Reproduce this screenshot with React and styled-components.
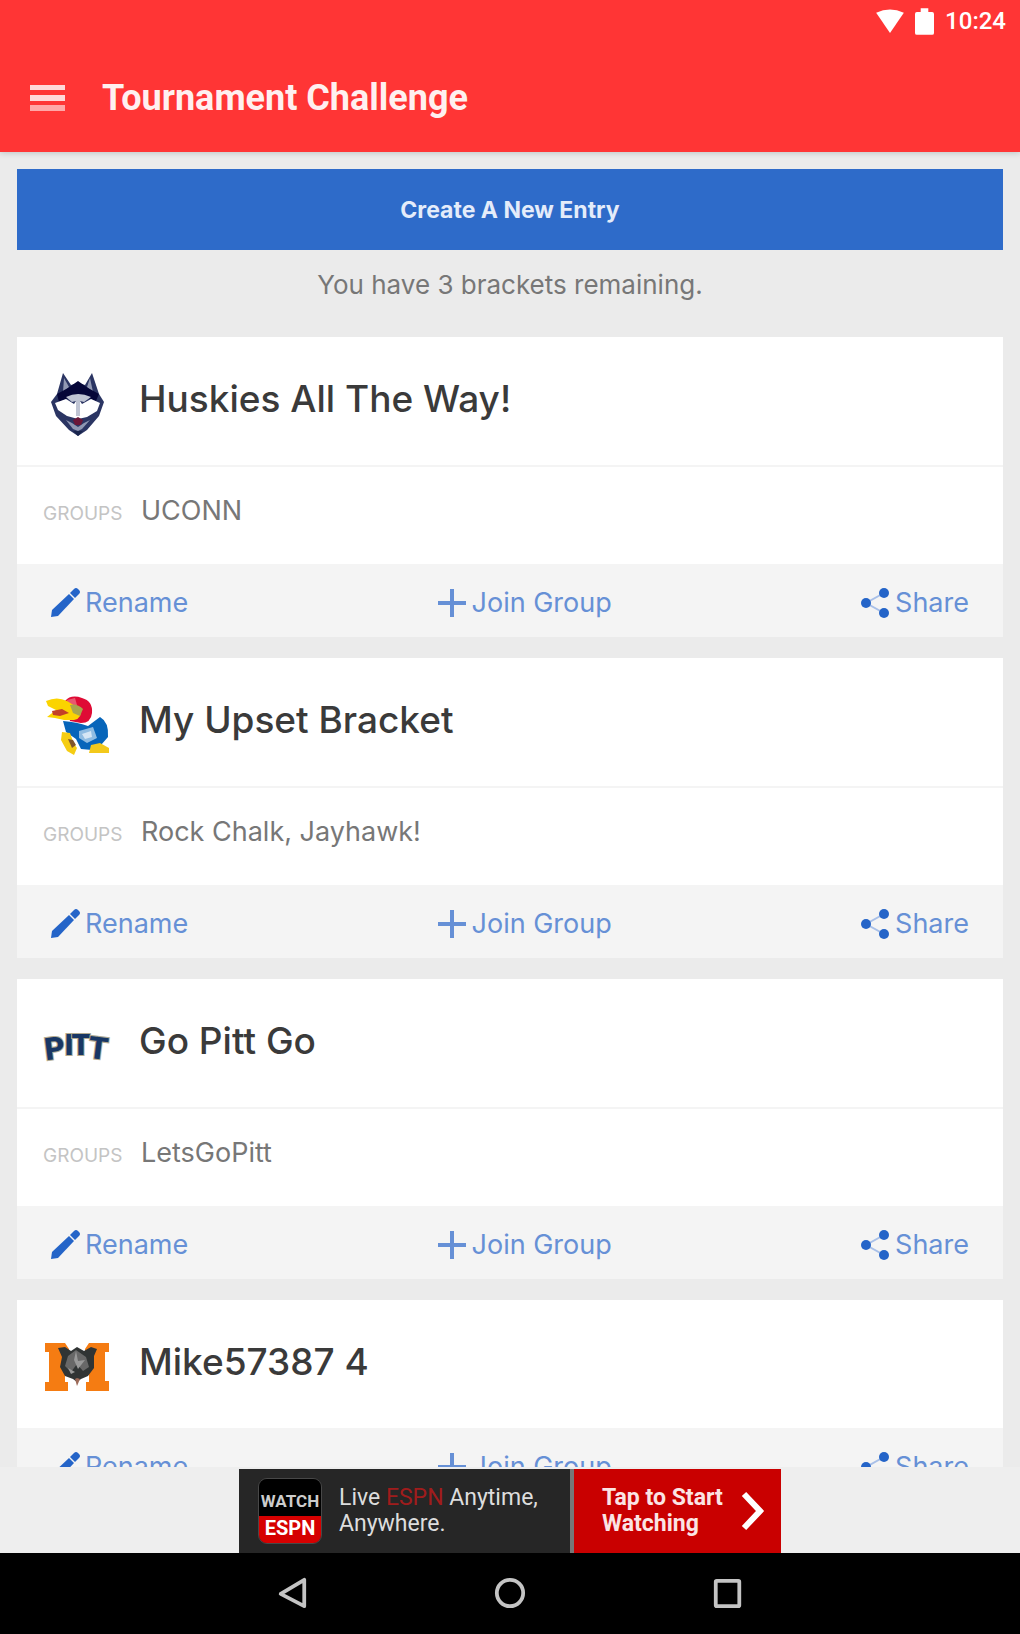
import * as React from 'react';
import styled, { createGlobalStyle } from 'styled-components';

const GlobalStyle = createGlobalStyle`
  * {
    box-sizing: border-box;
  }

  body {
    margin: 0;
    background: #000;
    font-family: Inter, 'Liberation Sans', sans-serif;
  }

  h1, h2, p, dl, dt, dd, ul {
    margin: 0;
    padding: 0;
  }

  button {
    border: 0;
    padding: 0;
    background: none;
    font-family: inherit;
    cursor: pointer;
  }
`

const Screen = styled.div`
  display: flex;
  flex-direction: column;
  height: 100vh;
  background: #ebebeb;
`

const Header = styled.header`
  flex: none;
  z-index: 1;
  color: #fff;
  background: #ff3535;
  box-shadow: 0 1px 6px rgba(0, 40, 40, 0.2);
`

const StatusBar = styled.div`
  display: flex;
  align-items: center;
  justify-content: flex-end;
  gap: 11px;
  height: 42px;
  padding-right: 14px;
  font-family: Roboto, sans-serif;
  font-size: 24px;
  font-weight: 500;
  line-height: 42px;
`

const Toolbar = styled.div`
  display: flex;
  align-items: center;
  gap: 37px;
  height: 110px;
  padding: 2px 30px 0;
`

const MenuButton = styled.button`
  display: flex;
  color: #ffd8d8;
`

const AppTitle = styled.h1`
  color: #fff0f0;
  font-family: Roboto, sans-serif;
  font-size: 36px;
  font-weight: 700;
  line-height: 44px;
`

const Content = styled.main`
  flex: 1;
  min-height: 0;
  padding: 17px;
  overflow-y: auto;
  scrollbar-width: none;
`

const CreateButton = styled.button`
  display: block;
  width: 100%;
  height: 81px;
  color: #e4ecfa;
  background: #2e6bc9;
  font-size: 23px;
  font-weight: 700;
`

const Remaining = styled.p`
  padding: 17px 0 34px;
  color: #777;
  font-size: 26px;
  line-height: 36px;
  text-align: center;
`

const EntryList = styled.ul`
  display: flex;
  flex-direction: column;
  gap: 21px;
  list-style: none;
`

const Card = styled.li`
  background: #fff;
`

const CardHead = styled.div`
  display: flex;
  align-items: center;
  gap: 28px;
  height: 128px;
  padding: 6px 26px 0;

  svg {
    flex: none;
  }
`

const EntryName = styled.h2`
  padding-bottom: 10px;
  color: #3a3a3a;
  font-size: 37px;
  font-weight: 500;
  line-height: 44px;
`

const Groups = styled.dl`
  display: flex;
  align-items: baseline;
  height: 99px;
  padding: 28px 26px 0;
  border-top: 2px solid #f4f4f4;
  line-height: 32px;
`

const GroupsLabel = styled.dt`
  width: 98px;
  color: #c4c4c4;
  font-size: 19px;
`

const GroupsValue = styled.dd`
  color: #777;
  font-size: 27px;
`

const Actions = styled.div`
  display: flex;
  align-items: center;
  justify-content: space-between;
  height: 73px;
  padding: 4px 34px 0;
  background: #f4f4f4;
`

const ActionButton = styled.button`
  display: flex;
  align-items: center;
  gap: 5px;
  color: #6690d6;
  font-size: 27px;
  line-height: 32px;

  svg {
    color: ${props => props.$soft ? '#6690d6' : '#2464c8'};
  }
`

const AdBar = styled.aside`
  display: flex;
  flex: none;
  align-items: flex-end;
  justify-content: center;
  height: 86px;
  background: #eee;
`

const AdLink = styled.a`
  display: flex;
  gap: 4px;
  width: 542px;
  height: 84px;
  background: #777;
  font-family: Roboto, sans-serif;
  font-size: 23px;
  line-height: 26px;
  text-decoration: none;
  white-space: nowrap;
`

const AdText = styled.div`
  display: flex;
  flex: 1;
  align-items: center;
  gap: 17px;
  padding-left: 19px;
  color: #ddd;
  background: #262626;
`

const Brand = styled.span`
  color: #a01c1c;
`

const AdCall = styled.div`
  display: flex;
  align-items: center;
  justify-content: space-between;
  width: 207px;
  padding: 0 16px 0 28px;
  color: #fbe4e4;
  background: #c90000;
  font-weight: 700;
`

const Badge = styled.div`
  display: flex;
  flex: none;
  flex-direction: column;
  width: 64px;
  height: 66px;
  border: 1px solid #484848;
  border-radius: 9px;
  overflow: hidden;
  font-size: 17px;
  font-weight: 700;
  line-height: 18px;
  text-align: center;
`

const BadgeTop = styled.div`
  flex: 1;
  padding-top: 13px;
  color: #ccc;
  background: #000;
`

const BadgeBottom = styled.div`
  flex: 1;
  padding-top: 3px;
  color: #fff;
  background: #d60000;
  font-size: 20px;
`

const NavBar = styled.nav`
  display: flex;
  flex: none;
  align-items: center;
  justify-content: center;
  gap: 186px;
  height: 81px;
  padding-bottom: 2px;
  background: #000;
`

const NavButton = styled.button`
  display: flex;
  color: #c4c4c4;
`


const WifiIcon = () => (
  <svg width="28" height="24" viewBox="0 0 30 26" fill="#fff" aria-hidden="true">
    <path d="M0 4 Q15 -3 30 4 L15 26 Z" />
  </svg>
)

const BatteryIcon = () => (
  <svg width="19" height="27" viewBox="0 0 20 28" fill="#fff" aria-hidden="true">
    <path d="M6 0h8v4h4a2 2 0 0 1 2 2v20a2 2 0 0 1-2 2H2a2 2 0 0 1-2-2V6a2 2 0 0 1 2-2h4z" />
  </svg>
)

const MenuIcon = () => (
  <svg width="35" height="28" viewBox="0 0 35 28" fill="currentColor" aria-hidden="true">
    <path d="M0 1h35v5H0zM0 11h35v6H0z" />
    <path d="M0 21h35v6H0z" opacity="0.7" />
  </svg>
)

const PencilIcon = () => (
  <svg width="29" height="29" viewBox="0 0 29 29" fill="currentColor" aria-hidden="true">
    <path d="M0 29 L1 22 L18 6 L23 11 L7 28 Z" />
    <path d="M19 5 L23 1 Q25 -1 27 1 L28 2 Q30 4 28 6 L24 10 Z" />
  </svg>
)

const PlusIcon = () => (
  <svg width="30" height="30" viewBox="0 0 30 30" fill="none" stroke="currentColor" strokeWidth="4" aria-hidden="true">
    <path d="M15 1v28M1 15h28" />
  </svg>
)

const ShareIcon = () => (
  <svg width="30" height="30" viewBox="0 0 30 30" fill="currentColor" aria-hidden="true">
    <path d="M24 5 L6 15 L24 25" fill="none" stroke="#a9c0e8" strokeWidth="2" />
    <circle cx="24" cy="5" r="5" />
    <circle cx="6" cy="15" r="5" />
    <circle cx="24" cy="25" r="5" />
  </svg>
)

const HuskyLogo = () => (
  <svg width="68" height="68" viewBox="0 0 68 68" role="img" aria-label="Connecticut Huskies">
    <path d="M20 3 L28 15 L35 13 L42 15 L49 3 L56 24 L61 32 L56 46 L44 60 L35 66 L26 60 L13 46 L8 32 L14 24 Z" fill="#2b3563" />
    <path d="M21 8 L26 17 L20 22 Z M47 8 L50 22 L44 17 Z" fill="#9299b3" />
    <path d="M14 24 L25 18 L35 11 L45 18 L56 24 L53 31 L35 24 L16 32 Z" fill="#050638" />
    <path d="M12 33 L23 29 L31 34 L35 28 L39 34 L48 29 L57 33 L54 41 L44 47 L35 49 L24 46 L15 40 Z" fill="#fff" />
    <path d="M23 27 Q35 21 48 27 L41 32 L37 31 L37 46 L33 46 L33 31 L29 32 Z" fill="#bfc4d3" />
    <path d="M23 50 L29 53 L35 57 L41 53 L47 50 L39 59 L35 61 L30 59 Z" fill="#8f97b2" />
    <path d="M30 50 L35 47 L40 50 L38 55 L32 55 Z" fill="#6b1738" />
    <path d="M30 61 L40 61 L35 66 Z" fill="#18244c" />
  </svg>
)

const JayhawkLogo = () => (
  <svg width="68" height="68" viewBox="0 0 68 68" role="img" aria-label="Kansas Jayhawks">
    <path d="M22 10 Q28 3 39 7 Q50 10 49 22 Q48 32 38 32 L27 30 Z" fill="#df0b35" />
    <path d="M24 9 L32 7 L34 14 L25 15 Z" fill="#e8586f" />
    <path d="M3 10 Q14 5 24 10 L37 18 Q40 27 31 29 L21 29 L12 27 L4 26 L13 19 L5 15 Z" fill="#fbd400" />
    <path d="M9 20 L19 18 L26 22 L17 25 L10 24 Z" fill="#c34128" />
    <path d="M27 14 Q34 12 40 18 L37 25 L30 22 Z" fill="#a9a64c" />
    <path d="M20 30 Q34 31 45 35 L57 26 Q66 31 65 46 L58 54 L49 59 L38 58 L33 48 L23 41 Z" fill="#0765ba" />
    <path d="M36 40 L50 36 L54 47 L44 52 L36 47 Z" fill="#8fbce2" />
    <path d="M39 43 L48 40 L49 46 L42 48 Z" fill="#d5e6f5" />
    <path d="M19 41 L27 42 L31 53 L34 57 L31 64 L24 60 L18 49 Z" fill="#f5cd13" />
    <path d="M25 48 L30 49 L33 54 L29 57 Z" fill="#80552d" />
    <path d="M48 54 L57 52 L66 57 L66 62 L46 62 Z" fill="#f3c91b" />
  </svg>
)

const PittLogo = () => (
  <svg width="68" height="68" viewBox="0 0 68 68" role="img" aria-label="Pittsburgh Panthers">
    <g
      fill="#183765"
      stroke="#b3ab91"
      strokeWidth="2"
      paintOrder="stroke"
      fontFamily="Roboto, sans-serif"
      fontWeight="900"
      textAnchor="middle"
    >
      <text x="13" y="47" fontSize="31" transform="rotate(-7 13 47)">P</text>
      <text x="26" y="43" fontSize="30">I</text>
      <text x="38" y="43" fontSize="30">T</text>
      <text x="54" y="47" fontSize="31" transform="rotate(7 54 47)">T</text>
    </g>
  </svg>
)

const MercerLogo = () => (
  <svg width="68" height="68" viewBox="0 0 68 68" role="img" aria-label="Mercer Bears">
    <path d="M2 10 H22 L34 28 L46 10 H66 V19 H62 V48 H66 V58 H43 V49 H46 V38 L34 50 L22 38 V49 H25 V58 H2 V49 H6 V19 H2 Z" fill="#f57c12" />
    <path d="M26 10 H42 V44 L34 54 L26 44 Z" fill="#fff" />
    <path d="M15 15 L22 14 L28 18 L34 14 L41 18 L48 14 L54 16 L51 23 L51 35 L45 43 L38 46 L34 49 L30 46 L22 43 L17 34 L19 24 Z" fill="#303434" />
    <path d="M25 23 L33 17 L43 24 L46 34 L40 38 L34 31 L28 39 L22 33 Z" fill="#686868" />
    <path d="M33 18 L35 28 L42 27 L35 36 L31 27 Z M25 35 L32 39 L28 41 Z" fill="#999" />
    <path d="M32 46 L34 45 L37 46 L34 53 Z" fill="#9d6a58" />
  </svg>
)

const ChevronIcon = () => (
  <svg width="24" height="40" viewBox="0 0 24 40" fill="none" stroke="#fff" strokeWidth="6" aria-hidden="true">
    <path d="M3 3 L19 20 L3 37" />
  </svg>
)

const entries = [
  { name: 'Huskies All The Way!', group: 'UCONN', Logo: HuskyLogo },
  { name: 'My Upset Bracket', group: 'Rock Chalk, Jayhawk!', Logo: JayhawkLogo },
  { name: 'Go Pitt Go', group: 'LetsGoPitt', Logo: PittLogo },
  { name: 'Mike57387 4', group: '', Logo: MercerLogo },
]

function Entry({ name, group, Logo }) {
  return (
    <Card>
      <CardHead>
        <Logo />
        <EntryName>{name}</EntryName>
      </CardHead>
      {group && (
        <Groups>
          <GroupsLabel>GROUPS</GroupsLabel>
          <GroupsValue>{group}</GroupsValue>
        </Groups>
      )}
      <Actions>
        <ActionButton><PencilIcon />Rename</ActionButton>
        <ActionButton $soft><PlusIcon />Join Group</ActionButton>
        <ActionButton><ShareIcon />Share</ActionButton>
      </Actions>
    </Card>
  )
}

export default function App() {
  return (
    <Screen>
      <GlobalStyle />
      <Header>
        <StatusBar>
          <WifiIcon />
          <BatteryIcon />
          <span>10:24</span>
        </StatusBar>
        <Toolbar>
          <MenuButton aria-label="Menu"><MenuIcon /></MenuButton>
          <AppTitle>Tournament Challenge</AppTitle>
        </Toolbar>
      </Header>

      <Content>
        <CreateButton>Create A New Entry</CreateButton>
        <Remaining>You have 3 brackets remaining.</Remaining>
        <EntryList>
          {entries.map(entry => <Entry key={entry.name} {...entry} />)}
        </EntryList>
      </Content>

      <AdBar>
        <AdLink href="#watch">
          <AdText>
            <Badge>
              <BadgeTop>WATCH</BadgeTop>
              <BadgeBottom>ESPN</BadgeBottom>
            </Badge>
            <p>Live <Brand>ESPN</Brand> Anytime,<br />Anywhere.</p>
          </AdText>
          <AdCall>
            <span>Tap to Start<br />Watching</span>
            <ChevronIcon />
          </AdCall>
        </AdLink>
      </AdBar>

      <NavBar>
        <NavButton aria-label="Back">
          <svg width="32" height="32" viewBox="0 0 34 34" fill="none" stroke="currentColor" strokeWidth="4" strokeLinejoin="round">
            <path d="M30 3 V31 L5 18 Z" />
          </svg>
        </NavButton>
        <NavButton aria-label="Home">
          <svg width="32" height="32" viewBox="0 0 34 34" fill="none" stroke="currentColor" strokeWidth="4">
            <circle cx="17" cy="17" r="14" />
          </svg>
        </NavButton>
        <NavButton aria-label="Recent apps">
          <svg width="32" height="32" viewBox="0 0 34 34" fill="none" stroke="currentColor" strokeWidth="4">
            <rect x="4" y="4" width="25" height="27" rx="1" />
          </svg>
        </NavButton>
      </NavBar>
    </Screen>
  )
}
